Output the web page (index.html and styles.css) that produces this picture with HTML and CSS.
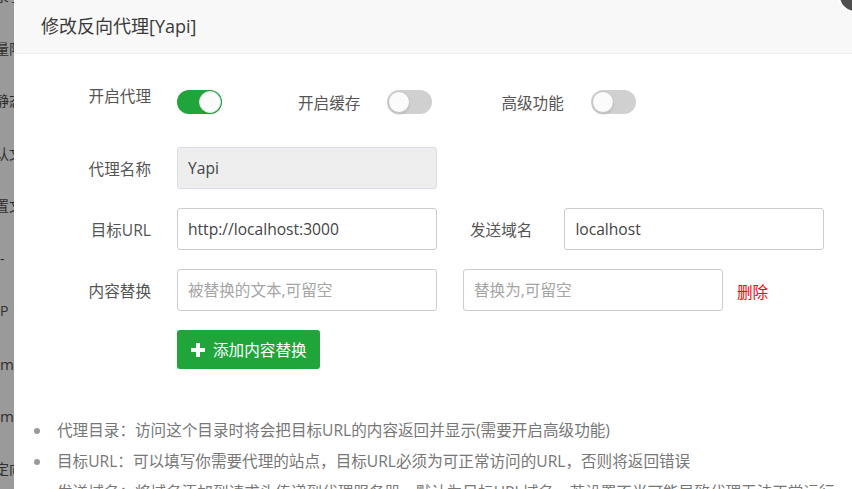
FILE: index.html
```html
<!DOCTYPE html>
<html lang="zh-CN">
<head>
  <meta charset="UTF-8">
  <title>修改反向代理</title>
  <link rel="stylesheet" href="styles.css">
</head>
<body>
  <div class="screen">
    <aside class="behind">
      <span>目录引</span>
      <span>流量限</span>
      <span>伪静态</span>
      <span>默认文</span>
      <span>配置文</span>
      <span class="short">-</span>
      <span class="short">P</span>
      <span class="latin">mp</span>
      <span class="latin">mc</span>
      <span>重定向</span>
    </aside>

    <div class="layer">
      <div class="layer-title">修改反向代理[Yapi]</div>
      <span class="layer-close"></span>

      <div class="layer-content">
        <form class="proxy-form">
          <div class="line switches">
            <span class="tname">开启代理</span>
            <label class="switch on"><span class="knob"></span></label>
            <span class="sname cache">开启缓存</span>
            <label class="switch"><span class="knob"></span></label>
            <span class="sname advanced">高级功能</span>
            <label class="switch"><span class="knob"></span></label>
          </div>

          <div class="line">
            <span class="tname">代理名称</span>
            <input class="bt-input" type="text" value="Yapi" readonly>
          </div>

          <div class="line">
            <span class="tname">目标URL</span>
            <input class="bt-input" type="text" value="http://localhost:3000">
            <span class="sname domain">发送域名</span>
            <input class="bt-input" type="text" value="localhost">
          </div>

          <div class="line">
            <span class="tname">内容替换</span>
            <input class="bt-input" type="text" placeholder="被替换的文本,可留空">
            <input class="bt-input second" type="text" placeholder="替换为,可留空">
            <a class="del" href="#">删除</a>
          </div>

          <div class="line actions">
            <span class="tname"></span>
            <button class="btn-add" type="button">
              <svg width="14" height="14" viewBox="0 0 14 14"><path d="M5 0h4v5h5v4h-5v5h-4v-5h-5v-4h5z" fill="#fff"/></svg>
              添加内容替换
            </button>
          </div>
        </form>

        <ul class="help">
          <li>代理目录：访问这个目录时将会把目标URL的内容返回并显示(需要开启高级功能)</li>
          <li>目标URL：可以填写你需要代理的站点，目标URL必须为可正常访问的URL，否则将返回错误</li>
          <li>发送域名：将域名添加到请求头传递到代理服务器，默认为目标URL域名，若设置不当可能导致代理无法正常运行</li>
        </ul>
      </div>
    </div>
  </div>
</body>
</html>
```

FILE: styles.css
```css
:root {
  --green: #20a53a;
  --text: #555;
  --border: #ccc;
}
body {
  margin: 0;
  overflow: hidden;
  font-family: 'Open Sans', 'Noto Sans CJK SC', sans-serif;
  color: var(--text);
}
.screen {
  display: flex;
  height: 489px;
}
.behind {
  width: 14px;
  flex-shrink: 0;
  background: #9a9a9a;
  color: #2e2e2e;
  font-size: 14px;
  overflow: hidden;
  display: flex;
  flex-direction: column;
}
.behind span {
  height: 52.5px;
  line-height: 52.5px;
  white-space: nowrap;
  margin-left: -19px;
}
.behind span:first-child {
  margin-top: -30px;
}
.behind span.short {
  margin-left: 0;
}
.behind span.latin {
  margin-left: 0;
  font-size: 15px;
}
.layer {
  flex: 1;
  background: #fff;
  position: relative;
}
.layer-title {
  height: 53px;
  line-height: 53px;
  padding-left: 27px;
  background: #f8f8f8;
  border-bottom: 1px solid #eee;
  font-size: 18px;
  color: #3a3a3a;
}
.layer-close {
  position: absolute;
  top: -21px;
  right: -20px;
  width: 30px;
  height: 30px;
  border-radius: 50%;
  background: #4f4f4f;
  border: 2px solid #fff;
}
.layer-content {
  padding: 25px 0 0 0;
}
.line {
  display: flex;
  align-items: center;
  height: 42px;
  margin-bottom: 19px;
  font-size: 15.6px;
}
.line.switches {
  margin-bottom: 26px;
}
.line.actions {
  align-items: flex-start;
}
.tname {
  width: 110px;
  margin-left: 27px;
  margin-right: 26px;
  text-align: right;
  white-space: nowrap;
}
.switches .tname {
  padding-bottom: 10px;
}
.sname {
  white-space: nowrap;
}
.sname.cache {
  margin-left: 76px;
  margin-right: 27px;
  padding-top: 4px;
}
.sname.advanced {
  margin-left: 69px;
  margin-right: 27px;
  padding-top: 4px;
}
.sname.domain {
  margin-left: 33px;
  margin-right: 32px;
}
.switch {
  width: 45px;
  height: 24px;
  box-sizing: border-box;
  border-radius: 12px;
  background: #d0d0d0;
  display: flex;
  align-items: center;
  padding: 0 1px;
  margin-top: 4px;
}
.switch.on {
  background: var(--green);
  justify-content: flex-end;
}
.knob {
  width: 22px;
  height: 22px;
  box-sizing: border-box;
  border-radius: 50%;
  background: #fbfbfb;
  border: 1px solid #c4c4c4;
  box-shadow: 0 2px 1px rgba(0,0,0,0.08);
}
.switch.on .knob {
  border-color: #e8e8e8;
  box-shadow: 1px 2px 1px rgba(0,0,0,0.06);
}
.bt-input {
  width: 260px;
  height: 42px;
  box-sizing: border-box;
  padding: 0 10px;
  border: 1px solid var(--border);
  border-radius: 3px;
  font-family: inherit;
  font-size: 15.6px;
  color: #444;
  outline: none;
}
.bt-input[readonly] {
  background: #eeeeef;
  border-color: #dcdce6;
}
.bt-input::placeholder {
  color: #a5a5a5;
}
.bt-input.second {
  margin-left: 26px;
}
.del {
  margin-left: 14px;
  color: #f00;
  text-decoration: none;
  font-size: 15.6px;
  padding-top: 2px;
}
.btn-add {
  display: flex;
  align-items: center;
  gap: 8px;
  height: 39px;
  width: 143px;
  padding: 0 0 0 14px;
  border: none;
  border-radius: 3px;
  background: var(--green);
  color: #fff;
  font-family: inherit;
  font-size: 15.6px;
}
.help {
  list-style: none;
  margin: 43px 0 0 0;
  padding: 0 0 0 20px;
  color: #777;
  font-size: 15.6px;
  line-height: 31px;
}
.help li {
  display: flex;
  align-items: center;
  white-space: nowrap;
}
.help li::before {
  content: "";
  width: 6px;
  height: 6px;
  border-radius: 50%;
  background: #999;
  margin-right: 17px;
  flex-shrink: 0;
}
```
